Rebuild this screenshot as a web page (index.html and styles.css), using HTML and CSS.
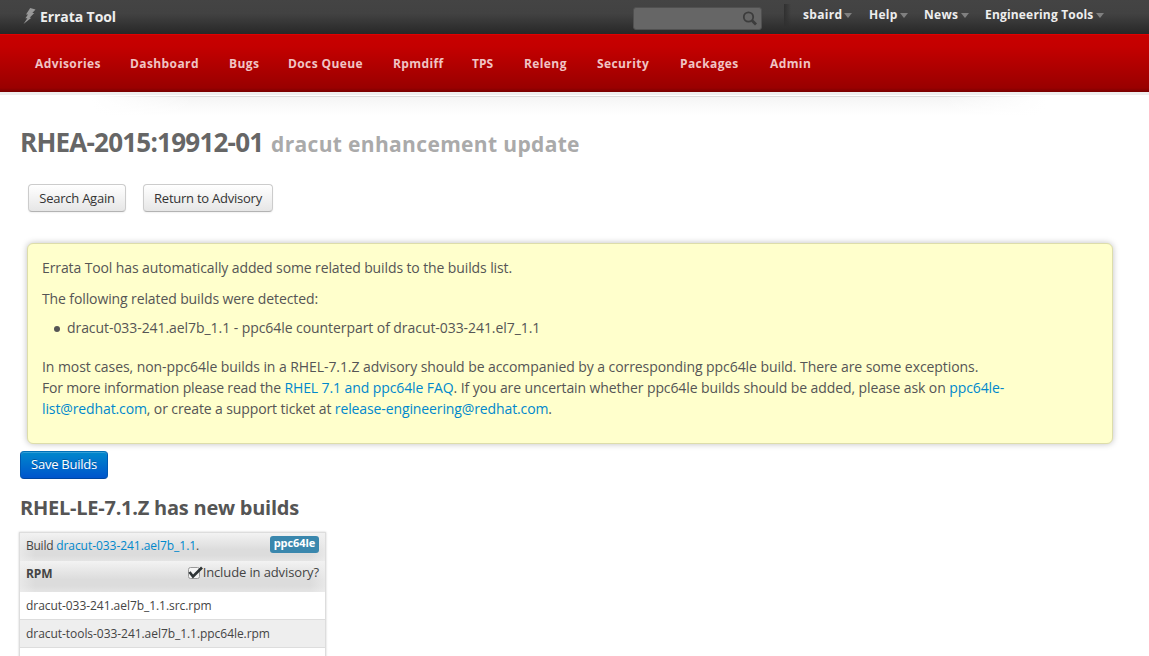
FILE: index.html
```html
<!DOCTYPE html>
<html lang="en">
<head>
<meta charset="utf-8">
<title>Errata Tool</title>
<link rel="stylesheet" href="styles.css">
</head>
<body>
<header class="topbar">
  <svg class="bolt" width="14" height="18" viewBox="0 0 14 18"><path d="M7.2 1 L12.5 2.4 L9.3 6 H11.3 L6.6 10.8 H8.4 L.5 17 L4.4 11.3 H2.4 L5 7.6 H3 Z" fill="#999"/></svg>
  <span class="brand">Errata Tool</span>
  <div class="search"><svg width="16" height="16" viewBox="0 0 16 16" fill="none" stroke="#3c3c3c"><circle cx="6.5" cy="6" r="4.7" stroke-width="1.8"/><path d="M10 9.5 L14 13.5" stroke-width="2.8"/></svg></div>
  <div class="divider"></div>
  <nav class="user-menu">
    <a>sbaird</a><a>Help</a><a class="news">News</a><a class="tools-menu">Engineering Tools</a>
  </nav>
</header>
<nav class="main-nav">
  <a>Advisories</a><a>Dashboard</a><a>Bugs</a><a>Docs Queue</a><a>Rpmdiff</a><a class="tps">TPS</a><a>Releng</a><a>Security</a><a>Packages</a><a>Admin</a>
</nav>
<div class="nav-shadow"></div>
<main>
  <h1><span class="advisory">RHEA-2015:19912-01</span><small>dracut enhancement update</small></h1>
  <div class="actions"><button class="btn search-again">Search Again</button><button class="btn return">Return to Advisory</button></div>
  <section class="notice">
    <p>Errata Tool has automatically added some related builds to the builds list.</p>
    <p>The following related builds were detected:</p>
    <ul><li>dracut-033-241.ael7b_1.1 - ppc64le counterpart of dracut-033-241.el7_1.1</li></ul>
    <p class="info"><span class="l1">In most cases, non-ppc64le builds in a RHEL-7.1.Z advisory should be accompanied by a corresponding ppc64le build. There are some exceptions.</span><br><span class="l2"><span class="lead">For more information please read the </span><a>RHEL 7.1 and ppc64le FAQ</a>. If you are uncertain whether ppc64le builds should be added, please ask on <a>ppc64le-</a></span><br><span class="l3"><a>list@redhat.com</a>, or create a support ticket at <a>release-engineering@redhat.com</a>.</span></p>
  </section>
  <button class="btn save">Save Builds</button>
  <h2>RHEL-LE-7.1.Z has new builds</h2>
  <section class="builds">
    <div class="build-head"><span class="build-name"><span class="word">Build </span><a>dracut-033-241.ael7b_1.1</a>.</span><span class="badge">ppc64le</span></div>
    <div class="rpm-head"><b>RPM</b><label><svg width="16" height="14" viewBox="0 0 16 14"><rect x="1.5" y="1.5" width="11" height="11" rx="2" fill="#f4f4f4" stroke="#999"/><path d="M2.5 6 L6 10.5 L15 1.5" fill="none" stroke="#2e3436" stroke-width="2.7"/></svg><span>Include in advisory?</span></label></div>
    <div class="row src">dracut-033-241.ael7b_1.1.src.rpm</div>
    <div class="row tools">dracut-tools-033-241.ael7b_1.1.ppc64le.rpm</div>
    <div class="row"></div>
  </section>
</main>
</body>
</html>
```
FILE: styles.css
```css
* { box-sizing: border-box; }
html, body { height: 656px; overflow: hidden; }
body { margin: 0; background: #fff; color: #555; font: 14px/21px "Open Sans", "Noto Sans", sans-serif; white-space: nowrap; }
a { color: #0088cc; }
.topbar { height: 34px; display: flex; align-items: flex-start; background: linear-gradient(#444, #424242 40%, #272727); color: #eee; font-weight: 700; padding-left: 23px; }
.bolt { margin-top: 7px; flex: none; }
.brand { margin: 6px 0 0 3px; width: 593px; font-size: 14px; letter-spacing: -.08px; }
.search { margin-top: 7px; width: 129px; height: 23px; border-radius: 3px; background: #666; border: 1px solid #505050; padding: 3px 3px 0 0; display: flex; justify-content: flex-end; }
.divider { margin: 4px 0 0 22px; width: 7px; height: 24px; background: linear-gradient(90deg, #303030, transparent); }
.user-menu { display: grid; grid-template-columns: 66px 55px 61px auto; margin: 4px 0 0 12px; font-size: 12px; letter-spacing: .3px; }
.user-menu a { color: #eee; display: flex; }
.user-menu a::after { content: ""; border: 4.5px solid transparent; border-top: 5px solid #808080; border-bottom: 0; margin: 9px 0 0 2px; }
.user-menu .news::after { margin-left: 3px; }
.user-menu .tools-menu { letter-spacing: .18px; }
.main-nav { height: 58px; border-top: 1px solid #e00000; background: linear-gradient(#c80000, #c40000 20%, #a40000 75%, #990000 93%, #780000); display: grid; grid-template-columns: 95px 99px 59px 105px 79px 52px 73px 83px 90px auto; padding: 18px 0 0 35px; font-size: 12px; font-weight: 700; letter-spacing: .4px; }
.main-nav a { color: #f0c4c4; }
.main-nav .tps { letter-spacing: 0; }
.nav-shadow { height: 23px; border-top: 3px solid #eee; background: linear-gradient(90deg, #fff 8%, transparent 17%, transparent 82%, #fff 91%), linear-gradient(#fff 1px, #ddd 1px, #ddd 2px, #f5f5f5 2px, #fff); }
main { padding: 0 20px; }
h1 { margin: 7px 0 0; height: 40px; line-height: 40px; font-size: 26px; color: #666; display: flex; }
.advisory { width: 251px; letter-spacing: -.77px; }
h1 small { font-size: 21px; line-height: 45px; color: #aaa; letter-spacing: .34px; }
.actions { display: flex; gap: 17px; padding: 22px 0 0 8px; }
.btn { font: 13px/18px "Open Sans", sans-serif; letter-spacing: -.24px; height: 28px; padding: 0; border-radius: 4px; border: 1px solid #ccc; border-bottom-color: #b3b3b3; background: linear-gradient(#fff, #e6e6e6); color: #333; box-shadow: inset 0 1px #fff, 0 1px 2px rgba(0,0,0,.06); display: block; }
.search-again { width: 98px; }
.return { width: 130px; }
.notice { margin: 31px 0 0 7px; width: 1086px; height: 201px; padding: 13px 14px; border: 1px solid #dda; border-radius: 6px; background: #ffc; box-shadow: 0 0 6px rgba(0,0,0,.25); letter-spacing: -.11px; }
.notice p { margin: 0 0 10px; }
.notice ul { margin: -2px 0 18px; padding-left: 12px; list-style: none; letter-spacing: -.065px; }
.notice li { display: flex; align-items: center; gap: 7px; }
.notice li::before { content: ""; width: 6px; height: 6px; border-radius: 50%; background: #555; margin-top: 2px; }
.l1 { letter-spacing: -.072px; }
.l2 { letter-spacing: -.095px; }
.l2 .lead { letter-spacing: -.18px; }
.l3 { letter-spacing: -.115px; }
.save { width: 88px; margin-top: 7px; padding-bottom: 2px; color: #fff; border-color: #0070b8 #0058b0 #0046a0; background: linear-gradient(#0088cc, #0055cc); box-shadow: inset 0 1px rgba(255,255,255,.2); text-shadow: 0 -1px rgba(0,0,0,.25); }
h2 { font-size: 20px; line-height: 40px; margin: 9px 0 4px; letter-spacing: -.24px; }
.builds { width: 307px; margin-left: -1px; border: 1px solid #ddd; box-shadow: 0 0 2px #ccc; font-size: 12px; letter-spacing: -.05px; color: #444; }
.build-head, .rpm-head { padding: 2px 6px; display: flex; justify-content: space-between; background: linear-gradient(90deg, rgba(240,240,240,.6), transparent 5%, transparent 95%, rgba(240,240,240,.6)), linear-gradient(#f3f3f3, #dcdcdc 60%, #dcdcdc 80%, #e4e4e4); }
.build-head { height: 28px; }
.word { letter-spacing: -.25px; }
.badge { margin-top: 1px; height: 17px; width: 49px; border-radius: 3px; background: #3a87ad; color: #fff; font-weight: 700; line-height: 14px; text-align: center; font-size: 11px; }
.rpm-head { height: 31px; }
.rpm-head label { display: flex; font-size: 13px; line-height: 19px; letter-spacing: -.12px; }
.rpm-head svg { margin-top: 3px; }
.row { height: 28px; padding: 3px 6px; border-bottom: 1px solid #ddd; background: #fff; }
.row:nth-child(even) { background: #eee; }
```
